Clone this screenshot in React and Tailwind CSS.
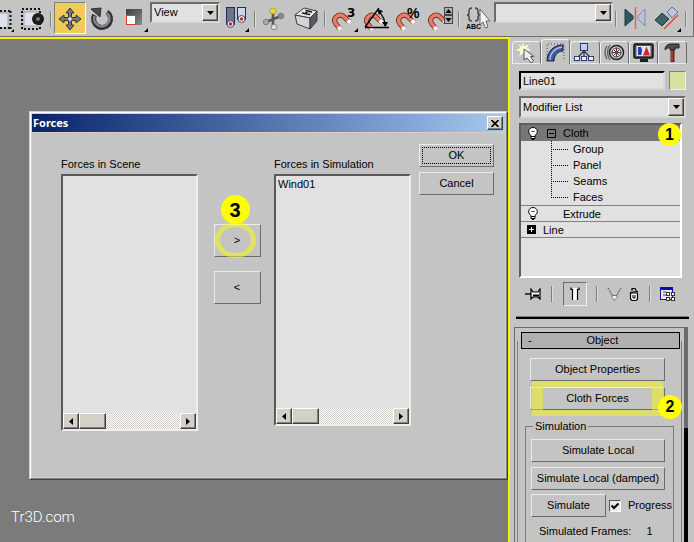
import { useState } from 'react';
import clsx from 'clsx';

const RAISED = 'border border-t-[#ececec] border-l-[#ececec] border-b-[#6b6b6b] border-r-[#6b6b6b]';
const SUNKEN = 'border-2 border-t-[#6b6b6b] border-l-[#6b6b6b] border-b-[#d8d8d8] border-r-[#d8d8d8]';
const WIN_BUTTON =
  'border border-t-white border-l-white border-b-[#404040] border-r-[#404040] bg-[#d4d0c8] shadow-[inset_-1px_-1px_0_#808080]';

function Icon({ w = 24, h = 24, children }) {
  return (
    <svg width={w} height={h} viewBox={`0 0 ${w} ${h}`} className="shrink-0" aria-hidden="true">
      {children}
    </svg>
  );
}

// red horseshoe with white tips, opening to the lower right
function Horseshoe({ children }) {
  return (
    <Icon w={28} h={28}>
      <path d="M10 25 L6 20 C2 15 8 9 13 12 L20 18.500" stroke="#5e2a24" strokeWidth="5" fill="none" />
      <path d="M10 25 L6 20 C2 15 8 9 13 12 L20 18.500" stroke="#ec7c66" strokeWidth="3.400" fill="none" />
      <path d="M8.500 23 L10.500 25.500 M17.800 16.500 L20.300 18.800" stroke="#fff" strokeWidth="4" />
      {children}
    </Icon>
  );
}

function RegionIcon() {
  return (
    <Icon w={16} h={28}>
      <rect x="-8" y="9" width="16" height="15" fill="#dde0ee" stroke="#9a9fb5" />
      <path d="M0 7 H12 M0 24 H12" stroke="#111" strokeWidth="2" strokeDasharray="2 2" />
      <path d="M10.500 7 V25" stroke="#111" strokeWidth="2" strokeDasharray="2 2" />
      <path d="M14 25 v3 h-3 z" fill="#000" />
    </Icon>
  );
}

function WindowCrossIcon() {
  return (
    <Icon w={28} h={28}>
      <rect x="6" y="8" width="14" height="14" fill="#dde0ee" stroke="#a2a6b8" />
      <rect x="4" y="5" width="18" height="20" fill="none" stroke="#111" strokeWidth="2" strokeDasharray="2 2" />
      <circle cx="20" cy="15" r="6" fill="#1b1b1b" />
      <circle cx="20" cy="15" r="2" fill="#777" />
    </Icon>
  );
}

function MoveIcon() {
  return (
    <Icon w={28} h={28}>
      <path
        d="M14 4 l4 5 h-2.500 v4.500 h4.500 V11 l5 4 -5 4 v-2.500 h-4.500 v4.500 H18 l-4 5 -4 -5 h2.500 v-4.500 H8 V19 l-5 -4 5 -4 v2.500 h4.500 V9 H10 z"
        fill="#77777f"
        stroke="#33333c"
      />
      <rect x="12.500" y="13.500" width="3" height="3" fill="#e8e8ee" />
    </Icon>
  );
}

function RotateIcon() {
  return (
    <Icon w={28} h={28}>
      <path d="M19 8 A8.500 8.500 0 1 1 6.500 11" fill="none" stroke="#303036" strokeWidth="5" />
      <path d="M19 9 A7.700 7.700 0 1 1 6.500 12" fill="none" stroke="#85858c" strokeWidth="2.500" />
      <path d="M3 5 L13 4 L12 13 z" fill="#4a4a50" stroke="#2d2d33" />
    </Icon>
  );
}

function ScaleIcon() {
  return (
    <Icon w={32} h={28}>
      <defs>
        <linearGradient id="scale" x1="0" y1="0" x2="1" y2="1">
          <stop offset="0" stopColor="#3d3d40" />
          <stop offset="1" stopColor="#8a8a8e" />
        </linearGradient>
      </defs>
      <rect x="8" y="5" width="16" height="16" fill="url(#scale)" />
      <rect x="8.500" y="11.500" width="9" height="9" fill="#fff" stroke="#e03a30" />
      <path d="M30 24 v4 h-4 z" fill="#000" />
    </Icon>
  );
}

function PivotIcon() {
  return (
    <Icon w={28} h={28}>
      <rect x="4.500" y="3.500" width="8" height="17" fill="#6e7484" stroke="#20305e" />
      <circle cx="8.500" cy="20" r="3.500" fill="#dfe3ee" stroke="#44506e" />
      <circle cx="8.500" cy="20" r="1.800" fill="#e02418" />
      <rect x="15.500" y="3.500" width="8" height="12" fill="#cfd6ea" stroke="#20305e" />
      <circle cx="19.500" cy="15" r="3.500" fill="#eef" stroke="#44506e" />
      <circle cx="19.500" cy="15" r="1.800" fill="#e02418" />
      <path d="M27 24 v4 h-4 z" fill="#000" />
    </Icon>
  );
}

function GizmoIcon() {
  return (
    <Icon w={28} h={28}>
      <path d="M13 8 V22 M6 18 L21 12" stroke="#55555a" strokeWidth="2.500" />
      <circle cx="13" cy="7" r="3" fill="#ecd92b" stroke="#a0921d" strokeWidth=".6" />
      <circle cx="6" cy="18" r="2.800" fill="#a9a9ad" stroke="#5a5a5e" strokeWidth=".6" />
      <circle cx="21" cy="12" r="2.800" fill="#8c8c90" stroke="#5a5a5e" strokeWidth=".6" />
      <circle cx="14" cy="23" r="2.800" fill="#dcdce0" stroke="#5a5a5e" strokeWidth=".6" />
    </Icon>
  );
}

function KeyIcon() {
  return (
    <Icon w={28} h={28}>
      <path d="M12 4 L25 7 L18 14 L3 11 z" fill="#e4e4ea" stroke="#3c3c44" />
      <path d="M3 11 L18 14 V25 L5 20 z" fill="#d4d4da" stroke="#3c3c44" />
      <path d="M25 7 V17 L18 25 V14 z" fill="#5a5a62" stroke="#3c3c44" />
      <path d="M10 9 L18 10.500 M13.500 6.500 L20 8 M16 7 L13 10" stroke="#111" strokeWidth="1.500" />
    </Icon>
  );
}

function SnapIcon() {
  return (
    <Horseshoe>
      <text x="17" y="13" fontSize="12" fontWeight="700" fontFamily="DejaVu Sans">3</text>
      <path d="M28 24 v4 h-4 z" fill="#000" />
    </Horseshoe>
  );
}

function AngleSnapIcon() {
  return (
    <Horseshoe>
      <path d="M3 23.500 H27 M3 23 L17 4" stroke="#000" strokeWidth="1.300" />
      <path d="M17 8 Q23 13 23 22" fill="none" stroke="#000" strokeWidth="1.200" />
      <path d="M15 5 l6 2 -4 4 z M20 18 h6 l-2.500 5 z" />
    </Horseshoe>
  );
}

function PercentSnapIcon() {
  return (
    <Horseshoe>
      <text x="13" y="14" fontSize="14" fontWeight="700" fontFamily="Liberation Sans">%</text>
    </Horseshoe>
  );
}

function SpinnerSnapIcon() {
  return (
    <Horseshoe>
      <rect x="18.500" y="3.500" width="8" height="7" fill="#b0b0b0" stroke="#444" />
      <rect x="18.500" y="11.500" width="8" height="8" fill="#b0b0b0" stroke="#444" />
      <path d="M22.500 5 l3 4 h-6 z M22.500 18 l3 -4 h-6 z" />
    </Horseshoe>
  );
}

function NamedSetsIcon() {
  return (
    <Icon w={28} h={28}>
      <path
        d="M8 4 q-3 0 -3 3 v2 q0 2 -2 2 q2 0 2 2 v2 q0 2 3 2 M11 4 q3 0 3 3 v2 q0 2 2 2 q-2 0 -2 2 v2 q0 2 -3 2"
        fill="none"
        stroke="#444"
        strokeWidth="1.400"
      />
      <text x="2" y="25" fontSize="7" fontWeight="700" fontFamily="Liberation Sans">ABC</text>
      <path d="M16 5 V21 L19 18 L21.500 24 L24 23 L22 17 H26 z" fill="#f4f4f4" stroke="#666" />
    </Icon>
  );
}

function MirrorIcon() {
  return (
    <Icon w={28} h={28}>
      <path d="M4 5 L12 12 V15 L4 22 z" fill="#2f5560" stroke="#1d3840" />
      <path d="M24 5 L17 12 V15 L24 22 z" fill="#b9c4d6" stroke="#7e8aa0" />
      <path d="M14.500 3 V25" stroke="#ee5a52" strokeWidth="1.500" />
    </Icon>
  );
}

function AlignIcon() {
  return (
    <Icon w={32} h={28}>
      <path d="M4 16 L11 9 L18 15 L11 22 z" fill="#3d6468" stroke="#22393c" />
      <path d="M16 8 L21 3 L27 8 L21 14 z" fill="#b8c6e2" stroke="#66748e" />
      <path d="M13 25 L27 11" stroke="#ee4038" strokeWidth="1.500" />
      <path d="M30 24 v4 h-4 z" fill="#000" />
    </Icon>
  );
}

function Tool({ label, active, children }) {
  return (
    <button
      type="button"
      aria-label={label}
      className={clsx(
        'flex h-8 w-8 shrink-0 items-center justify-center',
        active && 'border border-t-[#808080] border-l-[#808080] border-b-white border-r-white bg-[#f0cb58]'
      )}
    >
      {children}
    </button>
  );
}

function Divider() {
  return (
    <div className="flex h-4 w-1.5 shrink-0 justify-center self-center">
      <div className="w-px bg-[#808080]" />
      <div className="w-px bg-[#dcdcdc]" />
    </div>
  );
}

function Dropdown({ label, options, className, size }) {
  return (
    <div className={clsx('relative', SUNKEN, className)}>
      <select aria-label={label} className={clsx('block w-full appearance-none bg-[#e1e1e1] pr-4 pl-0.5 outline-none', size)}>
        {options.map((option) => (
          <option key={option}>{option}</option>
        ))}
      </select>
      <div className={clsx('pointer-events-none absolute top-0 right-0 flex h-full w-4 items-center justify-center', WIN_BUTTON)}>
        <Icon w={7} h={4}>
          <path d="M0 0 H7 L3.500 4 z" />
        </Icon>
      </div>
    </div>
  );
}

function Toolbar() {
  return (
    <header className="flex h-[37px] items-start border-r border-b border-[#6e6e6e] bg-[#c4c4c4] pt-0.5 pr-1">
      <button type="button" aria-label="Selection Region" className="flex h-8 w-4 shrink-0 items-center">
        <RegionIcon />
      </button>
      <Tool label="Window/Crossing"><WindowCrossIcon /></Tool>
      <Divider />
      <Tool label="Select and Move" active><MoveIcon /></Tool>
      <Tool label="Select and Rotate"><RotateIcon /></Tool>
      <Tool label="Select and Scale"><ScaleIcon /></Tool>
      <Dropdown label="Reference Coordinate System" options={['View']} className="w-[70px] shrink-0" size="h-[17px]" />
      <Tool label="Use Pivot Point Center"><PivotIcon /></Tool>
      <Divider />
      <Tool label="Select and Manipulate"><GizmoIcon /></Tool>
      <Tool label="Keyboard Shortcut Override"><KeyIcon /></Tool>
      <Divider />
      <Tool label="Snaps Toggle"><SnapIcon /></Tool>
      <Tool label="Angle Snap"><AngleSnapIcon /></Tool>
      <Tool label="Percent Snap"><PercentSnapIcon /></Tool>
      <Tool label="Spinner Snap"><SpinnerSnapIcon /></Tool>
      <Divider />
      <Tool label="Edit Named Selection Sets"><NamedSetsIcon /></Tool>
      <Dropdown label="Named Selection Sets" options={['']} className="min-w-0 flex-1" size="h-[17px]" />
      <Divider />
      <Tool label="Mirror"><MirrorIcon /></Tool>
      <Tool label="Align"><AlignIcon /></Tool>
      <Divider />
    </header>
  );
}

function Badge({ className, children }) {
  return (
    <span
      className={clsx(
        'absolute z-10 flex items-center justify-center rounded-full bg-[#ffff00] font-bold text-black',
        className
      )}
    >
      {children}
    </span>
  );
}

function ForceList({ label, items, height }) {
  return (
    <section className="w-[137px]">
      <h2 className="mb-0.5 h-4 leading-4">{label}</h2>
      <div
        className={clsx(
          'flex flex-col border-2 border-t-[#5a5a5a] border-l-[#5a5a5a] border-r-[#efeeea] border-b-[#efeeea] bg-[#e1e1e1]',
          height
        )}
      >
        <ul role="listbox" aria-label={label} className="flex-1 pl-0.5 leading-4">
          {items.map((item) => (
            <li key={item} role="option" aria-selected="false">{item}</li>
          ))}
        </ul>
        <div className="flex h-4 bg-[repeating-conic-gradient(#ffffff_0_25%,#d4d0c8_0_50%)] bg-[size:2px_2px]">
          <button type="button" aria-label="Scroll left" className={clsx('flex w-4 items-center justify-center', WIN_BUTTON)}>
            <Icon w={4} h={7}><path d="M4 0 V7 L0 3.500 z" /></Icon>
          </button>
          <div className={clsx('w-[27px]', WIN_BUTTON)} />
          <button type="button" aria-label="Scroll right" className={clsx('ml-auto flex w-4 items-center justify-center', WIN_BUTTON)}>
            <Icon w={4} h={7}><path d="M0 0 V7 L4 3.500 z" /></Icon>
          </button>
        </div>
      </div>
    </section>
  );
}

function ForcesDialog() {
  return (
    <div role="dialog" aria-label="Forces" className="mt-[72px] ml-[29px] border border-t-[#d4d0c8] border-l-[#d4d0c8] border-r-[#404040] border-b-[#404040]">
      <div className="border border-t-white border-l-white border-r-[#808080] border-b-[#808080]">
        <div className="border border-[#d4d0c8] bg-[#c4c4c4]">
          <div className="flex h-[18px] items-center justify-between bg-linear-to-r from-[#0a246a] to-[#a6caf0] pr-0.5 pl-px">
            <h1 className="font-['Noto_Sans',sans-serif] text-[11px] font-bold text-white">Forces</h1>
            <button type="button" aria-label="Close" className={clsx('flex h-3.5 w-4 items-center justify-center', WIN_BUTTON)}>
              <Icon w={8} h={7}><path d="M.5 0 L7.500 7 M7.500 0 L.5 7" stroke="#000" strokeWidth="1.600" /></Icon>
            </button>
          </div>
          <div className="flex items-start border-t border-[#d4d0c8] pr-[11px] pb-[46px] pl-[29px]">
            <div className="pt-[23px]">
              <ForceList label="Forces in Scene" items={[]} height="h-[257px]" />
            </div>
            <div className="flex flex-1 flex-col items-center gap-3.5 pt-[91px] pl-0.5">
              <div className="relative">
                <button type="button" className={clsx('block h-[33px] w-[47px]', RAISED)}>&gt;</button>
                <span className="pointer-events-none absolute -top-0.5 left-px h-9 w-[41px] rounded-[50%] border-5 border-[#ffff00]/50" />
                <Badge className="-top-[29px] left-[7px] size-[29px] text-xl">3</Badge>
              </div>
              <button type="button" className={clsx('h-[33px] w-[47px]', RAISED)}>&lt;</button>
            </div>
            <div className="pt-[23px]">
              <ForceList label="Forces in Simulation" items={['Wind01']} height="h-[252px]" />
            </div>
            <div className="ml-2 flex w-[75px] flex-col gap-[5px] pt-[11px]">
              <button type="button" className={clsx('h-[23px] p-0.5', RAISED)}>
                <span className="flex h-full items-center justify-center border border-dotted border-black">OK</span>
              </button>
              <button type="button" className={clsx('h-[23px]', RAISED)}>Cancel</button>
            </div>
          </div>
        </div>
      </div>
    </div>
  );
}

const TABS = [
  {
    name: 'Create',
    icon: (
      <>
        <path d="M7 0 L8.500 4.500 L13 2 L11 6 L15 8 L11 9.500 L12 14 L7.500 11 L3 14 L4.500 9.500 L0 8 L4.500 6 L2 2 L6 4.500 z" fill="#fffbd2" />
        <path d="M8 7 V18 L11 16 L15 21 L17.500 19 L14.500 14.500 H18 z" fill="#eee" stroke="#555" />
      </>
    ),
  },
  {
    name: 'Modify',
    icon: (
      <>
        <path d="M2 19 V2 H19 V19" fill="none" stroke="#444" strokeDasharray="1 2" />
        <path d="M2 19 C2 9 9 3 18 3 V9 C13 9 9 13 9 19 z" fill="#3f5a9e" stroke="#1a2236" />
        <path d="M5 18 C5 11 10 6 17 5" fill="none" stroke="#a9bfee" strokeWidth="1.500" />
      </>
    ),
  },
  {
    name: 'Hierarchy',
    icon: (
      <>
        <path d="M10 8 V15 M10 9 L3 16 M10 9 L17 16" stroke="#333" strokeWidth="1.200" />
        <rect x="6.500" y="1.500" width="7" height="7" fill="#c4cdf0" stroke="#2d3d7c" />
        <rect x=".5" y="14.500" width="5" height="4" fill="#eef" stroke="#2d3d7c" />
        <rect x="7.500" y="14.500" width="5" height="4" fill="#eef" stroke="#2d3d7c" />
        <rect x="14.500" y="14.500" width="5" height="4" fill="#eef" stroke="#2d3d7c" />
      </>
    ),
  },
  {
    name: 'Motion',
    icon: (
      <>
        <path d="M3 4 Q-1 10 3 17 M6 3 Q1 10 6 18" fill="none" stroke="#555" strokeWidth="1.200" />
        <circle cx="12.500" cy="10.500" r="7" fill="#c9c9c9" stroke="#222" strokeWidth="1.500" />
        <circle cx="12.500" cy="10.500" r="4.500" fill="#ddd" stroke="#444" />
        <path d="M12.500 6 V15 M8 10.500 H17 M9.500 7.500 L15.500 13.500 M15.500 7.500 L9.500 13.500" stroke="#444" />
        <circle cx="12.500" cy="10.500" r="1.500" fill="#a22" />
      </>
    ),
  },
  {
    name: 'Display',
    icon: (
      <>
        <rect x="1" y="2" width="19" height="14" rx="1.500" fill="#555" stroke="#111" strokeWidth="1.500" />
        <rect x="3.500" y="4" width="14" height="10" fill="#dce6fa" />
        <path d="M5 5 V13 H8 Q10 9 8 5 z" fill="#2740a8" />
        <path d="M13.500 4.500 L17 13.500 H10 z" fill="#e02020" />
        <path d="M7 18.500 H15" stroke="#222" strokeWidth="3" />
      </>
    ),
  },
  {
    name: 'Utilities',
    icon: (
      <>
        <path d="M10.500 7 V20" stroke="#6a2018" strokeWidth="4" />
        <path d="M10 8 V19" stroke="#b84a38" strokeWidth="1.500" />
        <path d="M3 8 Q3 3 8 2 H17 V6 H13 V8 H8 V6 Q5 5 3 8 z" fill="#4a4d55" stroke="#222" />
      </>
    ),
  },
];

function Tabs() {
  return (
    <div role="tablist" className="mr-[7px] flex h-[25px] items-end pl-0.5">
      {TABS.map((tab) => (
        <button
          key={tab.name}
          type="button"
          role="tab"
          aria-label={tab.name}
          aria-selected={tab.name === 'Modify'}
          className={clsx(
            'flex flex-1 items-center justify-center rounded-t-sm border-t border-r border-l border-t-[#f2f2f2] border-r-[#6b6b6b] border-l-[#f2f2f2]',
            tab.name === 'Modify' ? 'h-[25px]' : 'h-[23px] border-b border-b-[#e8e8e8]'
          )}
        >
          <Icon w={21} h={21}>{tab.icon}</Icon>
        </button>
      ))}
    </div>
  );
}

function Bulb() {
  return (
    <Icon w={10} h={13}>
      <path d="M3 8.500 C-1 6 .5 .5 5 .5 C9.500 .5 11 6 7 8.500 V11.500 H3 z" fill="#fff" stroke="#000" />
      <path d="M3 9.500 H7 M4 12.500 H6 M3.500 4 l1 1 1 -1 1 1" stroke="#000" fill="none" />
    </Icon>
  );
}

function ModifierStack() {
  const subObjects = ['Group', 'Panel', 'Seams', 'Faces'];
  return (
    <div className="relative mt-[5px] mr-1 h-[155px] border-2 border-t-[#5e5e5e] border-l-[#5e5e5e] border-r-white border-b-white bg-[#e1e1e1]">
      <ul className="leading-4">
        <li className="flex h-4 items-center bg-[#767676]">
          <span className="flex w-6 justify-center"><Bulb /></span>
          <span className="flex w-[18px] pl-0.5">
            <Icon w={9} h={9}><path d="M.5 .5 H8.500 V8.500 H.5 z M2 4.500 H7" fill="none" stroke="#000" /></Icon>
          </span>
          Cloth
        </li>
        {subObjects.map((name, i) => (
          <li key={name} className="flex h-4 items-center pl-[30px]">
            <Icon w={22} h={16}>
              <path d={i === 3 ? 'M.5 0 V9 M2 8.500 H17' : 'M.5 0 V16 M2 8.500 H17'} fill="none" stroke="#000" strokeDasharray="1 1" />
            </Icon>
            {name}
          </li>
        ))}
        <li className="flex h-4 items-center border-t border-[#808080]">
          <span className="flex w-6 justify-center"><Bulb /></span>
          <span className="w-[18px]" />
          Extrude
        </li>
        <li className="flex h-[17px] items-center border-t border-b border-[#808080]">
          <span className="flex w-[22px] pl-1.5">
            <Icon w={9} h={9}><path d="M0 0 H9 V9 H0 z" /><path d="M2 4.500 H7 M4.500 2 V7" stroke="#fff" /></Icon>
          </span>
          Line
        </li>
      </ul>
      <Badge className="-top-0.5 -right-px size-[23px] text-base">1</Badge>
    </div>
  );
}

function StackTools() {
  return (
    <div className="mt-1 mr-1 flex h-6 items-center justify-between pr-1.5 pl-1.5">
      <button type="button" aria-label="Pin Stack">
        <Icon w={17} h={12}>
          <path d="M0 6 H6" stroke="#000" strokeWidth="1.400" />
          <path d="M6 1 L8 4 H13 L15 1 V11 L13 9 H8 L6 11 z" fill="#fff" stroke="#000" strokeWidth="1.200" />
          <path d="M8 7.500 H14" stroke="#000" strokeWidth="2" />
        </Icon>
      </button>
      <Divider />
      <button type="button" aria-label="Show End Result" className="flex h-6 w-6 items-center justify-center border border-t-[#6b6b6b] border-l-[#6b6b6b] border-r-[#eee] border-b-[#eee]">
        <Icon w={10} h={14}>
          <path d="M3 1 H7 V13 H3 z" fill="#fff" />
          <path d="M1 .5 V2.500 H2.500 V13 M9 .5 V2.500 H7.500 V13" fill="none" stroke="#000" strokeWidth="1.200" />
        </Icon>
      </button>
      <Divider />
      <button type="button" aria-label="Make Unique">
        <Icon w={15} h={14}>
          <path d="M1 1 L5 8 L7.500 12 L10 8 L14 1" fill="none" stroke="#777" strokeDasharray="2 1" strokeWidth="1.500" />
          <path d="M5 8.500 h5 v2 l-2.500 3 -2.500 -3 z" fill="#eee" stroke="#777" />
        </Icon>
      </button>
      <button type="button" aria-label="Remove Modifier">
        <Icon w={10} h={14}>
          <path d="M1.500 6 H8.500 V12 L7 13.500 H3 L1.500 12 z" fill="#fff" stroke="#000" strokeWidth="1.200" />
          <path d="M1 5.500 L9 4.500 M3 4 V1.500 H6 L7.500 4" fill="none" stroke="#000" strokeWidth="1.200" />
          <path d="M4 8 V11 H6 V8" fill="none" stroke="#000" />
        </Icon>
      </button>
      <Divider />
      <button type="button" aria-label="Configure Modifier Sets">
        <Icon w={16} h={15}>
          <rect x=".5" y=".5" width="12" height="12" fill="#e9e9e9" stroke="#1a1a9c" />
          <rect x="0" y="0" width="13" height="3" fill="#0c0cb0" />
          <path d="M3 5 H6 M3 8 H6" stroke="#444" />
          <rect x="6.500" y="5.500" width="3" height="3" fill="#fff" stroke="#333" />
          <rect x="11.500" y="5.500" width="3" height="3" fill="#fff" stroke="#333" />
          <rect x="6.500" y="10.500" width="3" height="3" fill="#fff" stroke="#333" />
          <rect x="11.500" y="10.500" width="3" height="3" fill="#fff" stroke="#333" />
        </Icon>
      </button>
    </div>
  );
}

function PanelButton({ className, children }) {
  return (
    <button type="button" className={clsx('block h-[23px]', RAISED, className)}>
      {children}
    </button>
  );
}

function ObjectRollout() {
  const [progress, setProgress] = useState(true);
  return (
    <div className="mt-2 mr-1.5 ml-1 flex flex-1 border-t border-l border-[#6b6b6b]">
      <div className="min-w-0 flex-1 pt-1">
        <div className="flex h-full flex-col px-0.5">
          <button type="button" className="mr-0.5 ml-1 flex h-[17px] shrink-0 items-center border border-black bg-[#b0b0b0] px-1.5">
            <span>-</span>
            <span className="flex-1 text-center">Object</span>
          </button>
          <div className="-mt-2 flex flex-1 flex-col border-r border-l border-[#808080] pt-[17px] pr-[7px] pl-[7px]">
            <div className="mr-[9px] ml-[5px]">
              <PanelButton className="w-full">Object Properties</PanelButton>
              <div className="relative mt-1.5">
                <PanelButton className="w-full">Cloth Forces</PanelButton>
                <span className="pointer-events-none absolute inset-x-0.5 -inset-y-1.5 border-x-11 border-y-6 border-[#ffff00]/45" />
                <Badge className="top-2 -right-[17px] size-6 text-base">2</Badge>
              </div>
            </div>
            <fieldset className="mt-2 min-w-0 flex-1 border border-b-0 border-[#7a7a7a] pr-2 pl-[5px]">
              <legend className="ml-0.5 px-0.5 leading-4">Simulation</legend>
              <div className="flex flex-col pt-[5px]">
                <PanelButton>Simulate Local</PanelButton>
                <PanelButton className="mt-[5px] whitespace-nowrap">Simulate Local (damped)</PanelButton>
                <div className="mt-1 flex items-center">
                  <PanelButton className="w-[75px] shrink-0">Simulate</PanelButton>
                  <label className="ml-[3px] flex items-center gap-[7px]">
                    <span className="relative flex size-3">
                      <input
                        type="checkbox"
                        checked={progress}
                        onChange={(e) => setProgress(e.target.checked)}
                        className="size-3 appearance-none border border-t-[#555] border-l-[#555] border-r-white border-b-white bg-[#e6e9ee]"
                      />
                      {progress && (
                        <span className="pointer-events-none absolute inset-0">
                          <Icon w={12} h={12}><path d="M2.500 5.500 L5 8 L9.500 3.500" fill="none" stroke="#000" strokeWidth="2" /></Icon>
                        </span>
                      )}
                    </span>
                    Progress
                  </label>
                </div>
                <p className="mt-1.5 pl-2 leading-4 whitespace-nowrap">
                  Simulated Frames: <span className="ml-3">1</span>
                </p>
              </div>
            </fieldset>
          </div>
        </div>
      </div>
      <div className="flex w-1 flex-col">
        <div className="h-[100px] bg-[#6b6b6b]" />
        <div className="flex-1 bg-black" />
      </div>
    </div>
  );
}

function CommandPanel() {
  return (
    <aside className="flex w-[184px] shrink-0 flex-col bg-[#c4c4c4] pt-0.5">
      <Tabs />
      <div className="pr-2 pl-[9px]">
        <div className="mt-[7px] flex gap-1">
          <input
            aria-label="Object name"
            defaultValue="Line01"
            className="h-[19px] min-w-0 flex-1 border-2 border-t-black border-l-black border-r-[#d8d8d8] border-b-[#d8d8d8] bg-[#e1e1e1] pl-0.5 outline-none"
          />
          <button type="button" aria-label="Object color" className="h-[19px] w-[17px] border border-t-[#808080] border-l-[#808080] border-r-[#eee] border-b-[#eee] bg-[#d5e2a2]" />
        </div>
        <Dropdown label="Modifier List" options={['Modifier List']} className="mt-1.5" size="h-[18px]" />
        <ModifierStack />
        <StackTools />
      </div>
      <div className="mt-2.5 mr-[5px] ml-1.5 h-[3px] border-t border-[#808080] bg-black" />
      <ObjectRollout />
    </aside>
  );
}

export default function App() {
  return (
    <div className="flex min-h-screen flex-col bg-[#c4c4c4] font-['Liberation_Sans',sans-serif] text-[11px] text-black">
      <Toolbar />
      <div className="flex flex-1">
        <main className="flex min-w-0 flex-1 flex-col justify-between border-t-2 border-r-2 border-[#fff200] bg-[#7b7b7b]">
          <ForcesDialog />
          <p className="pb-3.5 pl-[11px] font-[Roboto,sans-serif] text-[15px] font-light text-white">Tr3D.com</p>
        </main>
        <CommandPanel />
      </div>
    </div>
  );
}
